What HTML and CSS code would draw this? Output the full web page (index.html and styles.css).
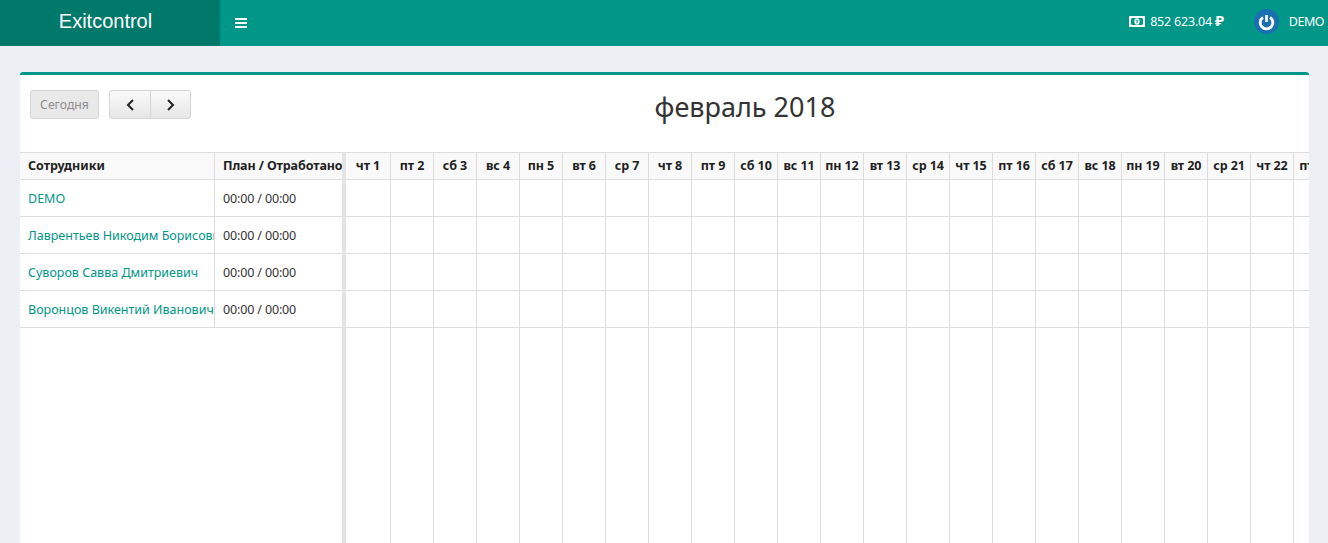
FILE: index.html
```html
<!DOCTYPE html>
<html lang="ru">
<head>
<meta charset="utf-8">
<title>Exitcontrol</title>
<link rel="stylesheet" href="styles.css">
</head>
<body>
<header class="topbar">
  <div class="brand">Exitcontrol</div>
  <button class="burger" aria-label="menu">
    <svg width="12" height="10" viewBox="0 0 12 10"><path d="M0 0h12v2H0zM0 4h12v2H0zM0 8h12v2H0z" fill="#fff"/></svg>
  </button>
  <div class="top-right">
    <div class="balance">
      <svg width="16" height="11" viewBox="0 0 16 11"><path fill="#fff" fill-rule="evenodd" d="M0 0h16v11H0zM3 2 2 3v5l1 1h10l1-1V3l-1-1z"/><ellipse cx="8" cy="5.5" rx="2.6" ry="3.3" fill="#fff"/><rect x="7.4" y="3.8" width="1.2" height="3.4" fill="#009688"/></svg>
      <span>852 623.04 <b class="rub">₽</b></span>
    </div>
    <div class="user">
      <svg class="avatar" width="25" height="25" viewBox="0 0 25 25"><circle cx="12.5" cy="12.5" r="12.5" fill="#1a6fb0"/><path d="M9 8.4a6.3 6.3 0 1 0 7 0" fill="none" stroke="#fff" stroke-width="2.8"/><rect x="11.2" y="6" width="2.6" height="7" fill="#fff"/></svg>
      <span>DEMO</span>
    </div>
  </div>
</header>
<main class="content">
  <section class="card">
    <div class="toolbar">
      <div class="tools">
        <button class="btn today">Сегодня</button>
        <div class="btn-group">
          <button class="btn nav"><svg width="10" height="12" viewBox="0 0 10 12"><path d="M8 1 3 6l5 5" fill="none" stroke="#222" stroke-width="2"/></svg></button>
          <button class="btn nav"><svg width="10" height="12" viewBox="0 0 10 12"><path d="m2 1 5 5-5 5" fill="none" stroke="#222" stroke-width="2"/></svg></button>
        </div>
      </div>
      <h2 class="title">февраль 2018</h2>
    </div>
    <div class="sheet">
      <div class="people">
        <div class="row head"><div class="c-name">Сотрудники</div><div class="c-plan">План / Отработано</div></div>
        <div class="row"><div class="c-name"><a href="#">DEMO</a></div><div class="c-plan">00:00 / 00:00</div></div>
        <div class="row"><div class="c-name"><a href="#">Лаврентьев Никодим Борисович</a></div><div class="c-plan">00:00 / 00:00</div></div>
        <div class="row"><div class="c-name"><a href="#">Суворов Савва Дмитриевич</a></div><div class="c-plan">00:00 / 00:00</div></div>
        <div class="row"><div class="c-name"><a href="#">Воронцов Викентий Иванович</a></div><div class="c-plan">00:00 / 00:00</div></div>
      </div>
      <div class="gutter"></div>
      <div class="days" id="days">
        <div class="day first"><div class="d-head">чт 1</div><i></i><i></i><i></i><i></i></div>
        <div class="day"><div class="d-head">пт 2</div><i></i><i></i><i></i><i></i></div>
        <div class="day"><div class="d-head">сб 3</div><i></i><i></i><i></i><i></i></div>
        <div class="day"><div class="d-head">вс 4</div><i></i><i></i><i></i><i></i></div>
        <div class="day"><div class="d-head">пн 5</div><i></i><i></i><i></i><i></i></div>
        <div class="day"><div class="d-head">вт 6</div><i></i><i></i><i></i><i></i></div>
        <div class="day"><div class="d-head">ср 7</div><i></i><i></i><i></i><i></i></div>
        <div class="day"><div class="d-head">чт 8</div><i></i><i></i><i></i><i></i></div>
        <div class="day"><div class="d-head">пт 9</div><i></i><i></i><i></i><i></i></div>
        <div class="day"><div class="d-head">сб 10</div><i></i><i></i><i></i><i></i></div>
        <div class="day"><div class="d-head">вс 11</div><i></i><i></i><i></i><i></i></div>
        <div class="day"><div class="d-head">пн 12</div><i></i><i></i><i></i><i></i></div>
        <div class="day"><div class="d-head">вт 13</div><i></i><i></i><i></i><i></i></div>
        <div class="day"><div class="d-head">ср 14</div><i></i><i></i><i></i><i></i></div>
        <div class="day"><div class="d-head">чт 15</div><i></i><i></i><i></i><i></i></div>
        <div class="day"><div class="d-head">пт 16</div><i></i><i></i><i></i><i></i></div>
        <div class="day"><div class="d-head">сб 17</div><i></i><i></i><i></i><i></i></div>
        <div class="day"><div class="d-head">вс 18</div><i></i><i></i><i></i><i></i></div>
        <div class="day"><div class="d-head">пн 19</div><i></i><i></i><i></i><i></i></div>
        <div class="day"><div class="d-head">вт 20</div><i></i><i></i><i></i><i></i></div>
        <div class="day"><div class="d-head">ср 21</div><i></i><i></i><i></i><i></i></div>
        <div class="day"><div class="d-head">чт 22</div><i></i><i></i><i></i><i></i></div>
        <div class="day"><div class="d-head">пт 23</div><i></i><i></i><i></i><i></i></div>
      </div>
    </div>
  </section>
</main>
</body>
</html>
```
FILE: styles.css
```css
* { box-sizing: border-box; }
html, body { margin: 0; height: 543px; overflow: hidden; }
body {
  background: #ecf0f5;
  font-family: "Noto Sans", "Open Sans", sans-serif;
  font-size: 12.5px;
  color: #333;
  display: flex;
  flex-direction: column;
}
.topbar {
  height: 46px;
  flex: none;
  background: #009688;
  color: #fff;
  display: flex;
  align-items: center;
}
.brand {
  width: 220px;
  height: 46px;
  background: #00796b;
  font-family: "Liberation Sans", Arial, sans-serif;
  font-size: 20px;
  line-height: 43px;
  text-align: center;
  padding-right: 9px;
}
.burger {
  width: 42px;
  height: 46px;
  padding: 0;
  border: 0;
  background: none;
  display: flex;
  align-items: center;
  justify-content: center;
}
.top-right {
  margin-left: auto;
  display: flex;
  align-items: center;
  height: 46px;
  font-size: 12.5px;
}
.balance { display: flex; align-items: center; gap: 5px; margin-right: 30px; letter-spacing: -0.2px; }
.balance svg { margin-top: -3px; }
.balance span { position: relative; top: -2px; }
.rub { font-weight: 700; font-size: 15px; line-height: 1; }
.user { display: flex; align-items: center; gap: 10px; padding-right: 4px; letter-spacing: -0.5px; }
.user span { position: relative; top: -2px; }
.avatar { display: block; margin-top: -3px; }
.content { flex: 1; padding: 26px 19px 0 20px; min-height: 0; }
.card {
  height: 100%;
  background: #fff;
  border-top: 3px solid #009688;
  border-radius: 3px 3px 0 0;
  display: flex;
  flex-direction: column;
}
.toolbar {
  height: 77px;
  flex: none;
  display: flex;
  padding: 15px 10px 0;
}
.tools { display: flex; gap: 10px; }
.btn {
  height: 29px;
  border: 1px solid #d5d5d5;
  background: linear-gradient(#fafafa, #e6e6e6);
  font: inherit;
  padding: 0;
  display: flex;
  align-items: center;
  justify-content: center;
}
.today {
  width: 69px;
  border-radius: 3px;
  background: #e9e9e9;
  color: #8d8d8d;
  font-size: 12.2px;
}
.btn-group { display: flex; }
.nav { width: 42px; border-radius: 3px 0 0 3px; }
.nav + .nav { width: 41px; border-radius: 0 3px 3px 0; margin-left: -1px; }
.title {
  flex: 1;
  margin: -1px 0 0;
  text-align: center;
  font-weight: 400;
  font-size: 27px;
  line-height: 36px;
  color: #333;
}
.sheet {
  flex: 1;
  min-height: 0;
  display: flex;
  border-top: 1px solid #ddd;
  overflow: hidden;
}
.people { width: 322px; flex: none; }
.row { display: flex; height: 37px; border-bottom: 1px solid #ddd; line-height: 38px; }
.row.head { height: 27px; line-height: 26px; background: #f9f9f9; font-weight: 700; color: #222; }
.c-name { width: 195px; flex: none; padding-left: 8px; border-right: 1px solid #ddd; white-space: nowrap; overflow: hidden; }
.c-plan { flex: 1; padding-left: 8px; white-space: nowrap; overflow: hidden; letter-spacing: -0.15px; }
.head .c-plan { letter-spacing: -0.1px; }
a { color: #009688; text-decoration: none; }
.gutter { width: 4px; flex: none; background: #e4e4e4; }
.days { flex: 1; min-width: 0; display: flex; overflow: hidden; }
.day { width: 43px; flex: none; border-right: 1px solid #ddd; }
.day.first { width: 45px; }
.d-head {
  height: 27px;
  line-height: 26px;
  background: #f9f9f9;
  border-bottom: 1px solid #ddd;
  text-align: center;
  font-weight: 700;
  color: #222;
  letter-spacing: -0.1px;
  white-space: nowrap;
}
.day i { display: block; height: 37px; border-bottom: 1px solid #ddd; }
```
